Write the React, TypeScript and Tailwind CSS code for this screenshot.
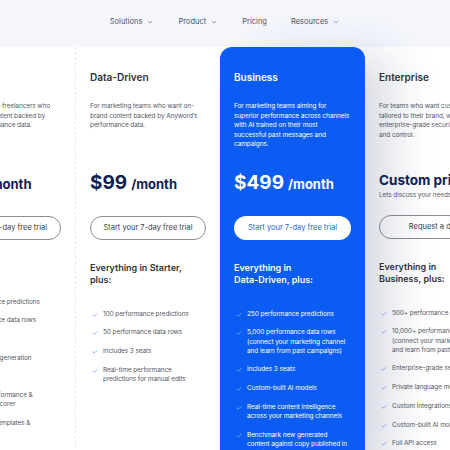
import React from 'react';
import { ChevronDown, Check } from 'lucide-react';

type Plan = {
  name: string;
  desc: string[];
  price?: string;
  custom?: string;
  customNote?: string;
  cta: string;
  includes: string[];
  features: string[][];
  featured?: boolean;
};

const PLANS: Plan[] = [
  {
    name: 'Starter',
    desc: ['For solopreneurs & freelancers who', 'want on-brand content backed by', 'Anyword’s performance data.'],
    price: '$49',
    cta: 'Start your 7-day free trial',
    includes: ['Includes:'],
    features: [
      ['25 performance predictions'],
      ['25 performance data rows'],
      ['1 seat'],
      ['Unlimited text generation'],
      ['Blog wizard'],
      ['Predictive performance &', 'engagement scorer'],
      ['100+ writing templates &', 'tools'],
    ],
  },
  {
    name: 'Data-Driven',
    desc: ['For marketing teams who want on-', 'brand content backed by Anyword’s', 'performance data.'],
    price: '$99',
    cta: 'Start your 7-day free trial',
    includes: ['Everything in Starter,', 'plus:'],
    features: [
      ['100 performance predictions'],
      ['50 performance data rows'],
      ['Includes 3 seats'],
      ['Real-time performance', 'predictions for manual edits'],
    ],
  },
  {
    name: 'Business',
    desc: [
      'For marketing teams aiming for',
      'superior performance across channels',
      'with AI trained on their most',
      'successful past messages and',
      'campaigns.',
    ],
    price: '$499',
    cta: 'Start your 7-day free trial',
    includes: ['Everything in', 'Data-Driven, plus:'],
    featured: true,
    features: [
      ['250 performance predictions'],
      ['5,000 performance data rows', '(connect your marketing channel', 'and learn from past campaigns)'],
      ['Includes 3 seats'],
      ['Custom-built AI models'],
      ['Real-time content intelligence', 'across your marketing channels'],
      ['Benchmark new generated', 'content against copy published in', 'your industry'],
    ],
  },
  {
    name: 'Enterprise',
    desc: ['For teams who want custom AI', 'tailored to their brand, with', 'enterprise-grade security', 'and control.'],
    custom: 'Custom pricing',
    customNote: 'Lets discuss your needs',
    cta: 'Request a demo',
    includes: ['Everything in', 'Business, plus:'],
    features: [
      ['500+ performance predictions'],
      ['10,000+ performance data rows', '(connect your marketing channel', 'and learn from past campaigns)'],
      ['Enterprise-grade security'],
      ['Private language models'],
      ['Custom integrations'],
      ['Custom-built AI models'],
      ['Full API access'],
    ],
  },
];

const PlanColumn: React.FC<{ plan: Plan; index: number }> = ({ plan, index }) => {
  const f = plan.featured;
  return (
    <div
      className={`w-[145px] shrink-0 px-[14px] pt-[23px] ${
        f
          ? 'relative z-10 bg-[#0b5cf3] rounded-t-[12px] text-white shadow-[34px_0_50px_-10px_rgba(30,41,90,0.18)]'
          : 'text-[#555a66]'
      } ${index === 1 ? 'border-l border-dashed border-[#e6e8ee]' : ''}`}
    >
      <h3 className={`text-[10px] leading-[14px] font-semibold ${f ? 'text-white' : 'text-[#2f3239]'}`}>
        {plan.name}
      </h3>
      <p
        className={`mt-[18px] h-[64px] text-[6.5px] leading-[9.5px] tracking-[-0.1px] ${
          f ? 'text-white' : 'text-[#555a66]'
        }`}
      >
        {plan.desc.map((l, i) => (
          <span key={i} className="block whitespace-nowrap">
            {l}
          </span>
        ))}
      </p>
      <div className="h-[41px]">
        {plan.price ? (
          <div className={`mt-[5px] flex items-baseline gap-[4px] leading-[24px] font-bold ${f ? 'text-white' : 'text-[#0c2152]'}`}>
            <span className="text-[19px]">{plan.price}</span>
            <span className="text-[13px]">/month</span>
          </div>
        ) : (
          <div className="mt-[4px]">
            <div className="text-[13.5px] leading-[20px] font-bold text-[#0c2152] whitespace-nowrap">{plan.custom}</div>
            <div className="mt-[1px] text-[6.3px] leading-[9px] text-[#555a66] whitespace-nowrap">{plan.customNote}</div>
          </div>
        )}
      </div>
      <button
        className={`mt-[1px] w-full h-[24px] rounded-full text-[7.5px] whitespace-nowrap ${
          f ? 'bg-white text-[#2563eb]' : 'border border-[#8a8d96] text-[#3a3d45] bg-white'
        }`}
      >
        {plan.cta}
      </button>
      <div className={`mt-[22px] text-[9px] leading-[12px] font-semibold ${f ? 'text-white' : 'text-[#2f3239]'}`}>
        {plan.includes.map((l, i) => (
          <span key={i} className="block whitespace-nowrap">
            {l}
          </span>
        ))}
      </div>
      <ul className="mt-[24px] flex flex-col gap-[9.5px] pb-10">
        {plan.features.map((lines, i) => (
          <li key={i} className="flex items-start gap-[5px]">
            <Check
              size={6}
              strokeWidth={2.5}
              className={`mt-[2px] ml-[2px] shrink-0 ${f ? 'text-[#a9c6ff]' : 'text-[#5b8def]'}`}
            />
            <span className={`text-[6.5px] leading-[9.2px] tracking-[-0.1px] ${f ? 'text-white' : 'text-[#555a66]'}`}>
              {lines.map((l, j) => (
                <span key={j} className="block whitespace-nowrap">
                  {l}
                </span>
              ))}
            </span>
          </li>
        ))}
      </ul>
    </div>
  );
};

const App: React.FC = () => {
  const nav = [
    { label: 'Solutions', menu: true },
    { label: 'Product', menu: true },
    { label: 'Pricing', menu: false },
    { label: 'Resources', menu: true },
  ];

  return (
    <div
      className="h-screen w-full overflow-hidden bg-[#f5f7fd] flex flex-col"
      style={{ fontFamily: 'Inter, "Noto Sans", sans-serif' }}
    >
      <nav className="h-[47px] shrink-0 flex items-start justify-center gap-[24px] pt-[16px]">
        {nav.map((n) => (
          <div key={n.label} className="flex items-center gap-[4px] text-[7.5px] leading-[11px] text-[#50535c]">
            <span>{n.label}</span>
            {n.menu && <ChevronDown size={8} strokeWidth={1.6} />}
          </div>
        ))}
      </nav>
      <div className="flex-1 flex bg-white ml-[-70px]">
        {PLANS.map((p, i) => (
          <PlanColumn key={p.name} plan={p} index={i} />
        ))}
      </div>
    </div>
  );
};

export default App;
